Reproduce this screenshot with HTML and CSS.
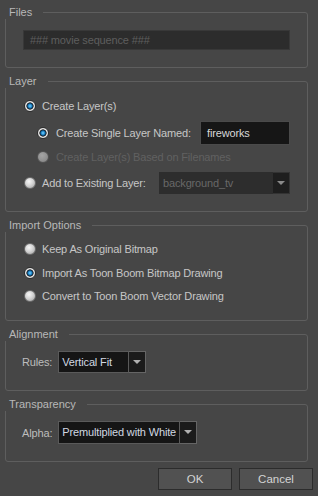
FILE: index.html
```html
<!DOCTYPE html>
<html lang="en">
<head>
  <meta charset="UTF-8" />
  <title>Import Images</title>
  <link rel="stylesheet" href="styles.css">
</head>
<body>
  <div class="dialog">
    <div class="group files">
      <span class="group-title">Files</span>
      <div class="path-field">### movie sequence ###</div>
    </div>

    <div class="group layer">
      <span class="group-title">Layer</span>
      <div class="row row-top">
        <span class="radio checked"></span>
        <span class="label">Create Layer(s)</span>
      </div>
      <div class="row sub row-name">
        <span class="radio checked"></span>
        <span class="label">Create Single Layer Named:</span>
        <div class="text-input">fireworks</div>
      </div>
      <div class="row sub row-disabled">
        <span class="radio disabled"></span>
        <span class="label muted">Create Layer(s) Based on Filenames</span>
      </div>
      <div class="row row-existing">
        <span class="radio"></span>
        <span class="label">Add to Existing Layer:</span>
        <div class="combo combo-off existing">
          <span class="combo-text">background_tv</span>
          <span class="combo-arrow"></span>
        </div>
      </div>
    </div>

    <div class="group import">
      <span class="group-title">Import Options</span>
      <div class="row">
        <span class="radio"></span>
        <span class="label">Keep As Original Bitmap</span>
      </div>
      <div class="row">
        <span class="radio checked"></span>
        <span class="label">Import As Toon Boom Bitmap Drawing</span>
      </div>
      <div class="row">
        <span class="radio"></span>
        <span class="label">Convert to Toon Boom Vector Drawing</span>
      </div>
    </div>

    <div class="group align">
      <span class="group-title">Alignment</span>
      <div class="row">
        <span class="label field-label">Rules:</span>
        <div class="combo rules">
          <span class="combo-text">Vertical Fit</span>
          <span class="combo-arrow"></span>
        </div>
      </div>
    </div>

    <div class="group transp">
      <span class="group-title">Transparency</span>
      <div class="row">
        <span class="label field-label">Alpha:</span>
        <div class="combo alpha">
          <span class="combo-text">Premultiplied with White</span>
          <span class="combo-arrow"></span>
        </div>
      </div>
    </div>

    <div class="buttons">
      <button class="btn">OK</button>
      <button class="btn">Cancel</button>
    </div>
  </div>
</body>
</html>
```

FILE: styles.css
```css
body {
  margin: 0;
  background-color: #464646;
  font-family: "Liberation Sans", Arial, sans-serif;
  font-size: 11px;
  letter-spacing: -0.15px;
  color: #c6c6c6;
}
.dialog {
  padding: 12px 10px 0 5px;
}

/* group boxes */
.group {
  position: relative;
  border: 1px solid #5e5e5e;
  border-radius: 3px;
  margin-bottom: 13px;
}
.group-title {
  position: absolute;
  top: -8px;
  left: -1px;
  line-height: 14px;
  padding: 0 11px 0 4px;
  background-color: #464646;
  color: #b8b8b8;
  letter-spacing: 0;
}
.files {
  height: 56px;
  padding: 17px 17px 0 17px;
  box-sizing: border-box;
}
.layer {
  padding: 14px 17px 17px 18px;
}
.import {
  padding: 13px 17px 14px 18px;
}
.align, .transp {
  padding: 16px 17px 17px 16px;
}
.align .row {
  height: 22px;
}
.transp .row {
  height: 23px;
}
.transp {
  margin-bottom: 6px;
}

/* rows */
.row {
  display: flex;
  align-items: center;
  height: 20px;
}
.row.sub {
  padding-left: 13px;
}
.import .row + .row {
  margin-top: 3.5px;
}
.row-name {
  height: 24px;
  margin-top: 5px;
}
.row-disabled {
  margin-top: 2px;
}
.row-existing {
  height: 22px;
  margin-top: 5px;
}
.label {
  margin-left: 6px;
  white-space: nowrap;
}
.sub .label {
  margin-left: 7px;
}
.label.muted {
  color: #616161;
}
.field-label {
  margin-left: 0;
  margin-right: 6px;
  color: #bdbdbd;
}

/* radio buttons */
.radio {
  width: 12px;
  height: 12px;
  border-radius: 50%;
  flex-shrink: 0;
  box-sizing: border-box;
  border: 1px solid #6c6c6c;
  background: radial-gradient(circle at 40% 35%, #f6f6f6 0, #d4d4d4 45%, #9c9c9c 100%);
}
.radio.checked {
  border-color: #2e2e2e;
  background: radial-gradient(circle at 50% 50%, #7fd4ff 0, #1e88cc 25%, #0d3554 40%, #1a1a1a 46%, #eeeeee 56%, #bdbdbd 100%);
}
.radio.disabled {
  border-color: #5c5c5c;
  background: radial-gradient(circle at 40% 35%, #e4e4e4 0, #c4c4c4 55%, #a2a2a2 100%);
  opacity: 0.6;
}

/* text fields */
.path-field {
  height: 20px;
  line-height: 18px;
  padding-left: 6px;
  background-color: #2c2c2c;
  border: 1px solid #383838;
  box-sizing: border-box;
  color: #5e5e5e;
}
.text-input {
  margin-left: auto;
  width: 90px;
  height: 24px;
  line-height: 22px;
  padding-left: 6px;
  box-sizing: border-box;
  background-color: #161616;
  border: 1px solid #4a4a4a;
  color: #d8d8d8;
}

/* combo boxes */
.combo {
  display: flex;
  height: 22px;
  box-sizing: border-box;
}
.combo-text {
  flex: 1;
  line-height: 20px;
  padding-left: 3px;
  background-color: #151515;
  border: 1px solid #5a5a5a;
  color: #d2d8e2;
  white-space: nowrap;
  overflow: hidden;
}
.combo-arrow {
  width: 16px;
  position: relative;
  background-color: #1b1b1b;
  border: 1px solid #656565;
  border-left: none;
}
.combo-arrow::after {
  content: "";
  position: absolute;
  left: 4px;
  top: 8px;
  border-left: 4px solid transparent;
  border-right: 4px solid transparent;
  border-top: 4px solid #b0b0b0;
}
.combo-off .combo-text {
  background-color: #2d2d2d;
  border-color: #2d2d2d;
  color: #686868;
}
.combo-off .combo-arrow {
  background-color: #1e1e1e;
  border-color: #333333;
}
.combo-off .combo-arrow::after {
  border-top-color: #8a8a8a;
}
.existing {
  margin-left: auto;
  width: 131px;
}
.rules {
  width: 88px;
}
.alpha {
  width: 139px;
  height: 23px;
}

/* dialog buttons */
.buttons {
  display: flex;
  justify-content: flex-end;
  gap: 7px;
  margin-right: -5px;
}
.btn {
  width: 74px;
  height: 22px;
  background-color: #515151;
  border: 1px solid #2c2c2c;
  color: #d4d4d4;
  font-family: "Liberation Sans", Arial, sans-serif;
  font-size: 11.5px;
  padding: 0;
}
```
